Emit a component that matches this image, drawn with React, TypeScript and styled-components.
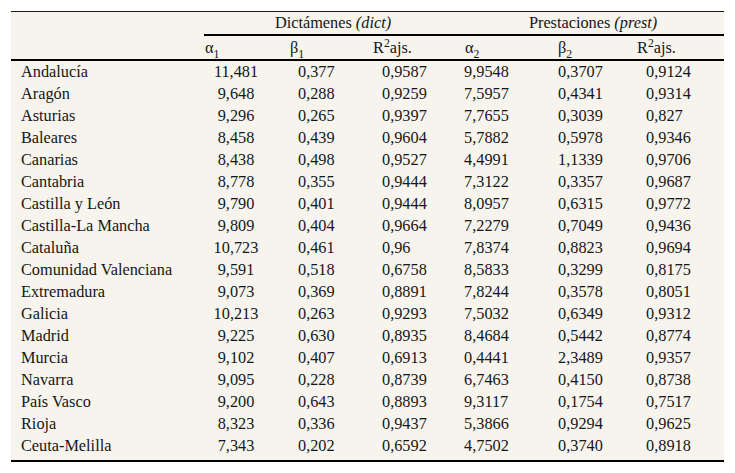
import styled, { createGlobalStyle } from "styled-components";

const GlobalStyle = createGlobalStyle`
    body {
        margin: 0;
        background: #ffffff;
    }
`;

const Page = styled.div`
    padding: 11px;
`;

const Table = styled.table`
    width: 713px;
    table-layout: fixed;
    border-collapse: separate;
    border-spacing: 0;
    background: #f7f4ee;
    border-top: 1px solid #1a1a1a;
    font-family: "Liberation Serif", "Times New Roman", serif;
    font-size: 16.3px;
    color: #161616;
`;

const GroupCell = styled.th`
    padding: 0;
    height: 22px;
    line-height: 22px;
    font-weight: normal;
    text-align: center;
    border-bottom: 2px solid #000;
    white-space: nowrap;
`;

const CornerCell = styled.th`
    padding: 0;
    border-bottom: 2px solid #000;
`;

const SubHead = styled.th<{ $pad: number }>`
    padding: 0 0 0 ${(p) => p.$pad}px;
    height: 23px;
    line-height: 23px;
    font-weight: normal;
    text-align: left;
    border-bottom: 2px solid #000;
    white-space: nowrap;
`;

const Sub = styled.sub`
    font-size: 0.72em;
    vertical-align: -0.45em;
    line-height: 0;
`;

const Sup = styled.sup`
    font-size: 0.72em;
    vertical-align: 0.55em;
    line-height: 0;
`;

const Row = styled.tr<{ $last?: boolean }>`
    & > td {
        height: 22px;
        line-height: 22px;
        padding-top: 0;
        padding-bottom: ${(p) => (p.$last ? "3px" : "0")};
        border-bottom: ${(p) => (p.$last ? "2px solid #000" : "none")};
        white-space: nowrap;
    }
`;

const Label = styled.td`
    padding-left: 10px;
    text-align: left;
`;

const Value = styled.td<{ $pad: number; $center?: boolean }>`
    text-align: ${(p) => (p.$center ? "center" : "left")};
    padding-left: ${(p) => (p.$center ? 0 : p.$pad)}px;
    padding-right: ${(p) => (p.$center ? p.$pad : 0)}px;
`;

const COLS = [193, 84, 82, 92, 93, 79, 90];

// header left offsets and value offsets per numeric column
const HEAD_PAD = [1, 2, 3, 3, 3, 3];
const VALUE_PAD = [20, 10, 12, 2, 3, 12];

const ROWS: [string, ...string[]][] = [
    ["Andalucía", "11,481", "0,377", "0,9587", "9,9548", "0,3707", "0,9124"],
    ["Aragón", "9,648", "0,288", "0,9259", "7,5957", "0,4341", "0,9314"],
    ["Asturias", "9,296", "0,265", "0,9397", "7,7655", "0,3039", "0,827"],
    ["Baleares", "8,458", "0,439", "0,9604", "5,7882", "0,5978", "0,9346"],
    ["Canarias", "8,438", "0,498", "0,9527", "4,4991", "1,1339", "0,9706"],
    ["Cantabria", "8,778", "0,355", "0,9444", "7,3122", "0,3357", "0,9687"],
    ["Castilla y León", "9,790", "0,401", "0,9444", "8,0957", "0,6315", "0,9772"],
    ["Castilla-La Mancha", "9,809", "0,404", "0,9664", "7,2279", "0,7049", "0,9436"],
    ["Cataluña", "10,723", "0,461", "0,96", "7,8374", "0,8823", "0,9694"],
    ["Comunidad Valenciana", "9,591", "0,518", "0,6758", "8,5833", "0,3299", "0,8175"],
    ["Extremadura", "9,073", "0,369", "0,8891", "7,8244", "0,3578", "0,8051"],
    ["Galicia", "10,213", "0,263", "0,9293", "7,5032", "0,6349", "0,9312"],
    ["Madrid", "9,225", "0,630", "0,8935", "8,4684", "0,5442", "0,8774"],
    ["Murcia", "9,102", "0,407", "0,6913", "0,4441", "2,3489", "0,9357"],
    ["Navarra", "9,095", "0,228", "0,8739", "6,7463", "0,4150", "0,8738"],
    ["País Vasco", "9,200", "0,643", "0,8893", "9,3117", "0,1754", "0,7517"],
    ["Rioja", "8,323", "0,336", "0,9437", "5,3866", "0,9294", "0,9625"],
    ["Ceuta-Melilla", "7,343", "0,202", "0,6592", "4,7502", "0,3740", "0,8918"],
];

const HEADERS = [
    <>α<Sub>1</Sub></>,
    <>β<Sub>1</Sub></>,
    <>R<Sup>2</Sup>ajs.</>,
    <>α<Sub>2</Sub></>,
    <>β<Sub>2</Sub></>,
    <>R<Sup>2</Sup>ajs.</>,
];

function App() {
    return (
        <Page>
            <GlobalStyle />
            <Table>
                <colgroup>
                    {COLS.map((w, i) => (
                        <col key={i} style={{ width: w }} />
                    ))}
                </colgroup>
                <thead>
                    <tr>
                        <CornerCell rowSpan={2} />
                        <GroupCell colSpan={3}>
                            Dictámenes <i>(dict)</i>
                        </GroupCell>
                        <GroupCell colSpan={3}>
                            Prestaciones <i>(prest)</i>
                        </GroupCell>
                    </tr>
                    <tr>
                        {HEADERS.map((h, i) => (
                            <SubHead key={i} $pad={HEAD_PAD[i]}>
                                {h}
                            </SubHead>
                        ))}
                    </tr>
                </thead>
                <tbody>
                    {ROWS.map(([name, ...values], r) => (
                        <Row key={name} $last={r === ROWS.length - 1}>
                            <Label>{name}</Label>
                            {values.map((v, i) => (
                                <Value key={i} $pad={VALUE_PAD[i]} $center={i === 0}>
                                    {v}
                                </Value>
                            ))}
                        </Row>
                    ))}
                </tbody>
            </Table>
        </Page>
    );
}

export default App;
